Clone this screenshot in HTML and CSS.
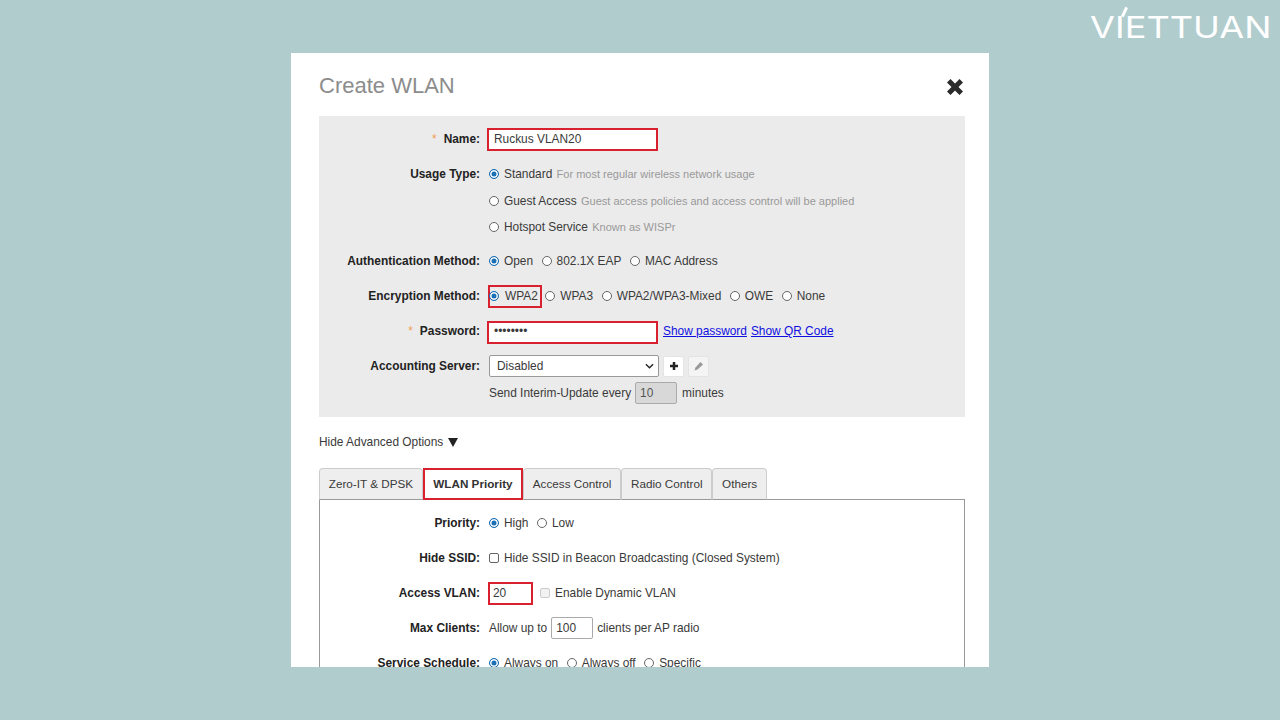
FILE: index.html
```html
<!DOCTYPE html>
<html lang="en">
<head>
<meta charset="utf-8">
<title>Create WLAN</title>
<link rel="stylesheet" href="styles.css">
</head>
<body>
<div class="logo"><span class="logo-accent"></span><span class="logo-text">VIETTUAN</span></div>
<main class="dialog">
  <header class="dialog-head">
    <h1>Create WLAN</h1>
    <svg class="close" viewBox="0 0 18 18" aria-label="Close"><path d="M4.500 1 9 5.500 13.500 1 17 4.500 12.500 9l4.500 4.500-3.500 3.500L9 12.500 4.500 17 1 13.500 5.500 9 1 4.500z"/></svg>
  </header>

  <section class="panel">
    <div class="row"><div class="label"><span class="req">*</span>Name:</div><div class="field"><input class="text w171 hl" value="Ruckus VLAN20"></div></div>
    <div class="group">
      <div class="row sub"><div class="label">Usage Type:</div><div class="field"><span class="rd on"></span>Standard <span class="hint">For most regular wireless network usage</span></div></div>
      <div class="row sub"><div class="label"></div><div class="field"><span class="rd"></span>Guest Access <span class="hint">Guest access policies and access control will be applied</span></div></div>
      <div class="row sub"><div class="label"></div><div class="field"><span class="rd"></span>Hotspot Service <span class="hint">Known as WISPr</span></div></div>
    </div>
    <div class="row"><div class="label">Authentication Method:</div><div class="field"><span class="opt"><span class="rd on"></span>Open</span><span class="opt"><span class="rd"></span>802.1X EAP</span><span class="opt"><span class="rd"></span>MAC Address</span></div></div>
    <div class="row"><div class="label">Encryption Method:</div><div class="field"><span class="opt boxed"><span class="rd on"></span>WPA2</span><span class="opt"><span class="rd"></span>WPA3</span><span class="opt"><span class="rd"></span>WPA2/WPA3-Mixed</span><span class="opt"><span class="rd"></span>OWE</span><span class="opt"><span class="rd"></span>None</span></div></div>
    <div class="row"><div class="label"><span class="req">*</span>Password:</div><div class="field"><input class="text w171 hl" type="password" value="12345678"><a href="#" class="link first">Show password</a><a href="#" class="link">Show QR Code</a></div></div>
    <div class="row"><div class="label">Accounting Server:</div><div class="field"><div class="select">Disabled<svg viewBox="0 0 10 6"><path d="M1 1l4 4 4-4"/></svg></div><button class="icon-btn"><svg viewBox="0 0 10 10"><path class="plus" d="M5 1v8M1 5h8"/></svg></button><button class="icon-btn"><svg viewBox="0 0 10 10"><path class="pen" d="M0.500 9.500l1-3 5-5.500 2.500 2.500-5.500 5z"/></svg></button></div></div>
    <div class="row sub tight"><div class="label"></div><div class="field">Send Interim-Update every<input class="text w42 dis" value="10" disabled>minutes</div></div>
  </section>

  <div class="advanced">Hide Advanced Options <span class="tri"></span></div>

  <nav class="tabs">
    <span class="tab">Zero-IT &amp; DPSK</span>
    <span class="tab active">WLAN Priority</span>
    <span class="tab">Access Control</span>
    <span class="tab">Radio Control</span>
    <span class="tab">Others</span>
  </nav>
  <section class="tab-body">
    <div class="row"><div class="label">Priority:</div><div class="field"><span class="opt"><span class="rd on"></span>High</span><span class="opt"><span class="rd"></span>Low</span></div></div>
    <div class="row"><div class="label">Hide SSID:</div><div class="field"><span class="cb"></span>Hide SSID in Beacon Broadcasting (Closed System)</div></div>
    <div class="row"><div class="label">Access VLAN:</div><div class="field"><input class="text w45 hl" value="20"><span class="cb faint"></span>Enable Dynamic VLAN</div></div>
    <div class="row"><div class="label">Max Clients:</div><div class="field">Allow up to<input class="text w42" value="100">clients per AP radio</div></div>
    <div class="row"><div class="label">Service Schedule:</div><div class="field"><span class="opt"><span class="rd on"></span>Always on</span><span class="opt"><span class="rd"></span>Always off</span><span class="opt"><span class="rd"></span>Specific</span></div></div>
  </section>
</main>
</body>
</html>
```
FILE: styles.css
```css
* { box-sizing: border-box; }
html, body { margin: 0; height: 720px; overflow: hidden; }
body {
  background: #b1cccd;
  font: 11.9px "Liberation Sans", Arial, sans-serif;
  color: #3a3a3a;
  display: flex;
  justify-content: center;
  align-items: flex-start;
  padding-top: 53px;
}
.logo {
  position: absolute;
  left: 1090px;
  top: 11px;
  color: #fff;
  white-space: nowrap;
}
.logo-text {
  display: block;
  font: 400 30px/32px Inter, "Liberation Sans", sans-serif;
  transform: scaleX(1.205);
  transform-origin: left center;
}
.logo-accent {
  position: absolute;
  left: 33px;
  top: -4px;
  width: 3px;
  height: 10px;
  background: #fff;
  transform: rotate(25deg);
}
.dialog {
  width: 698px;
  height: 614px;
  background: #fff;
  padding: 0 24px 0 28px;
  overflow: hidden;
}
.dialog-head {
  height: 63px;
  display: flex;
  justify-content: space-between;
  align-items: center;
  padding-top: 2px;
}
.dialog-head h1 {
  margin: 0;
  font-size: 22px;
  font-weight: 400;
  color: #8c8c8c;
}
.close { width: 18px; height: 18px; fill: #2b2b2b; margin: 2px 1px 0 0; }
.panel {
  background: #ebebeb;
  height: 301px;
  padding-top: 5px;
}
.group { padding: 5px 0 3px; }
.row {
  display: flex;
  align-items: center;
  height: 35px;
}
.row.sub { height: 26.500px; }
.row.tight { margin-top: -4px; }
.label {
  width: 161px;
  flex: none;
  text-align: right;
  font-weight: 700;
  color: #222;
}
.req { color: #f0a050; margin-right: 7px; font-weight: 400; }
.field {
  margin-left: 9px;
  display: flex;
  align-items: center;
  white-space: pre;
}
.hint { color: #999; font-size: 11px; margin-left: 1px; }
.opt { display: inline-flex; align-items: center; margin-right: 8.500px; }
.rd {
  width: 10px;
  height: 10px;
  border-radius: 50%;
  border: 1px solid #666;
  background: #fff;
  margin: 0 5px 0 0;
  flex: none;
}
.rd.on {
  border-color: #1a6fb5;
  background: #1a6fb5;
  box-shadow: inset 0 0 0 1.500px #fff;
}
.cb {
  width: 10px;
  height: 10px;
  border: 1px solid #666;
  border-radius: 2px;
  background: #fff;
  margin: 0 5px 0 0;
  flex: none;
}
.cb.faint { border-color: #ccc; background: #f2f2f2; margin: 0 5px 0 7px; }
.text {
  font: inherit;
  color: #3a3a3a;
  height: 22px;
  padding: 0 4px;
  background: #fff;
  border: 1px solid #aaa;
  border-radius: 2px;
  outline: none;
}
.w171 { width: 171px; }
.w45 { width: 45px; }
.w42 { width: 42px; margin: 0 4px 0 4px; }
.hl {
  border: 2px solid #d9202e;
  border-radius: 0;
  height: 23px;
  padding: 0 3px 2px 5px;
  margin: 2px 0 0 -2px;
}
.w45.hl { margin-left: -1px; padding-left: 3px; }
.dis { background: #d8d8d8; color: #555; margin-right: 5px; }
.boxed {
  border: 2px solid #d9202e;
  height: 23px;
  padding: 0 2px 0 0;
  margin: 0 3.500px 0 -1px;
}
.boxed .rd { margin: 0 6px 0 -1px; }
.link { color: #1010e0; margin-left: 4px; }
.link.first { margin-left: 5px; }
.select {
  width: 170px;
  height: 22px;
  display: flex;
  align-items: center;
  justify-content: space-between;
  padding: 0 4px 0 7px;
  background: #fff;
  border: 1px solid #999;
  border-radius: 2px;
}
.select svg { width: 9px; height: 6px; fill: none; stroke: #222; stroke-width: 1.500; }
.icon-btn {
  width: 21px;
  height: 21px;
  margin-left: 4px;
  padding: 0;
  border: 1px solid #e4e4e4;
  border-radius: 2px;
  background: #fff;
  display: inline-flex;
  align-items: center;
  justify-content: center;
}
.icon-btn + .icon-btn { background: #f4f4f4; }
.icon-btn svg { width: 10px; height: 10px; }
.plus { stroke: #222; stroke-width: 2.500; fill: none; }
.pen { fill: #999; }
.advanced {
  margin-top: 17px;
  height: 16px;
  line-height: 16px;
  display: flex;
  align-items: center;
  white-space: pre;
  color: #3a3a3a;
}
.tri {
  width: 0;
  height: 0;
  border-left: 5px solid transparent;
  border-right: 5px solid transparent;
  border-top: 9px solid #222;
  margin-left: 1px;
}
.tabs {
  display: flex;
  margin-top: 18px;
  height: 32px;
  position: relative;
  z-index: 1;
}
.tab {
  display: flex;
  align-items: center;
  padding: 0 8.800px 2px;
  height: 32px;
  font-size: 11.700px;
  background: #eee;
  border: 1px solid #ccc;
  border-bottom-color: #999;
  border-radius: 4px 4px 0 0;
  white-space: nowrap;
}
.tab.active {
  background: #fff;
  font-weight: 700;
  color: #333;
  border: 2px solid #d9202e;
  border-radius: 0;
  padding: 0 8.500px 2px;
}
.tab-body {
  border: 1px solid #999;
  margin-top: -1px;
  height: 220px;
  padding-top: 5px;
}
.tab-body .label { width: 160px; }
```
